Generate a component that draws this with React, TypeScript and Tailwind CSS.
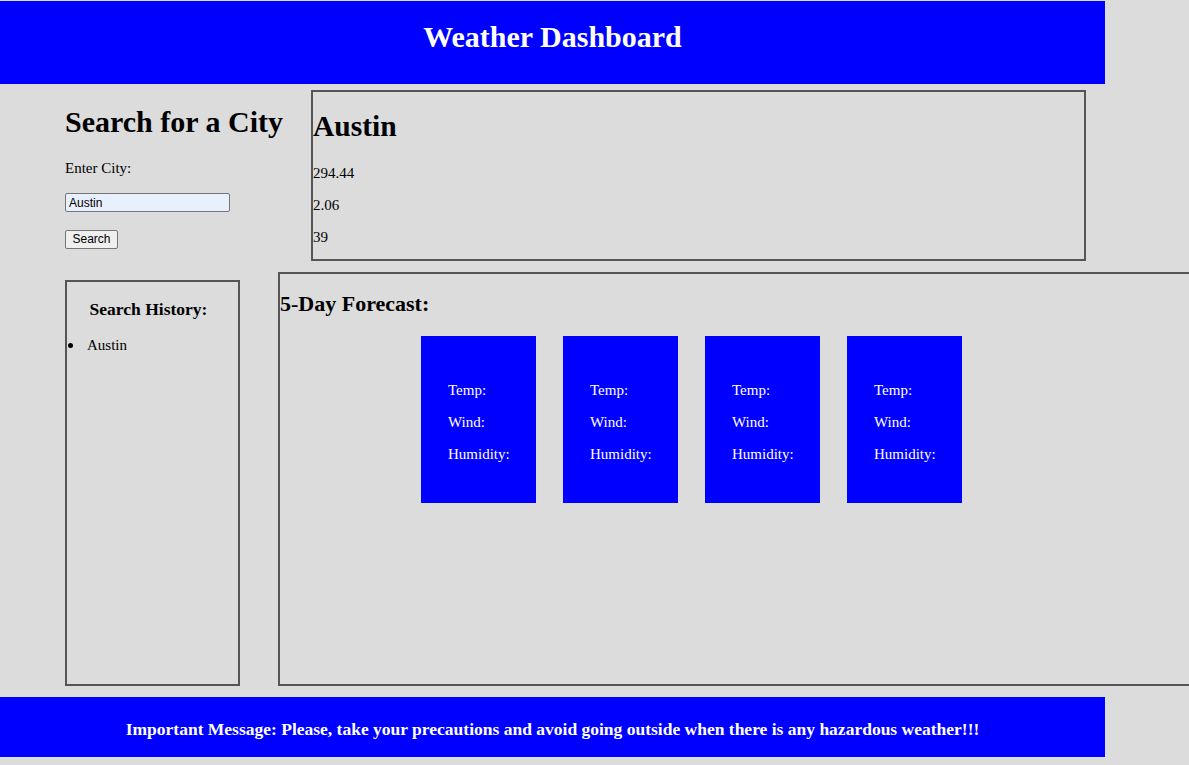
export default function App() {
  const days = [1, 2, 3, 4];

  return (
    <div className="w-[1189px] min-h-[765px] overflow-hidden bg-[#dcdcdc] pt-px font-['Liberation_Serif',serif] text-[15px] text-black">
      {/* Header */}
      <header className="h-[83px] w-[1105px] bg-[#0000ff] pt-[19px] text-center">
        <h1 className="text-[30px] font-bold leading-[33px] text-white">Weather Dashboard</h1>
      </header>

      {/* Search + current weather */}
      <div className="flex items-start">
        <section className="ml-[65px] w-[246px] shrink-0 pt-[21px]">
          <h1 className="text-[30px] font-bold leading-[33px]">Search for a City</h1>
          <p className="mt-[22px] leading-[17px]">Enter City:</p>
          <input
            defaultValue="Austin"
            className="mt-[16px] block h-[19px] w-[165px] rounded-[2px] border border-[#767676] bg-[#e8f0fe] pl-[3px] font-['Liberation_Sans',sans-serif] text-[12px] text-black outline-none"
          />
          <button className="mt-[18px] block h-[19px] w-[53px] rounded-[2px] border border-[#767676] bg-[#efefef] font-['Liberation_Sans',sans-serif] text-[12px] leading-[17px] text-black">
            Search
          </button>
        </section>

        <section className="mt-[6px] w-[775px] shrink-0 border-2 border-[#555]">
          <h1 className="mt-[18px] mb-[22px] text-[29.5px] font-bold leading-[33px]">Austin</h1>
          <p className="my-[15px] leading-[17px]">294.44</p>
          <p className="my-[15px] leading-[17px]">2.06</p>
          <p className="mt-[15px] mb-[13px] leading-[17px]">39</p>
        </section>
      </div>

      {/* History + forecast */}
      <div className="mt-[11px] flex items-start">
        <aside className="ml-[65px] mt-[8px] h-[406px] w-[175px] shrink-0 border-2 border-[#555]">
          <h3 className="mt-[17px] pr-[8px] text-center text-[17.5px] font-bold leading-[20px]">Search History:</h3>
          <ul className="mt-[18px]">
            <li className="flex items-center leading-[17px]">
              <span className="ml-px h-[5px] w-[5px] rounded-full bg-black" />
              <span className="ml-[14px]">Austin</span>
            </li>
          </ul>
        </aside>

        <section className="ml-[38px] h-[414px] w-[940px] shrink-0 border-2 border-[#555]">
          <h2 className="mt-[17px] text-[22px] font-bold leading-[25px]">5-Day Forecast:</h2>
          <div className="ml-[141px] mt-[20px] flex gap-[27px]">
            {days.map((d) => (
              <div key={d} className="h-[167px] w-[115px] bg-[#0000ff] pl-[27px] pt-[46px] text-white">
                <p className="mb-[15px] leading-[17px]">Temp:</p>
                <p className="mb-[15px] leading-[17px]">Wind:</p>
                <p className="leading-[17px]">Humidity:</p>
              </div>
            ))}
          </div>
        </section>
      </div>

      {/* Footer */}
      <footer className="mt-[11px] flex h-[60px] w-[1105px] items-center justify-center bg-[#0000ff]">
        <h3 className="pt-[4px] text-[17.5px] font-bold leading-[20px] text-white">
          Important Message: Please, take your precautions and avoid going outside when there is any hazardous weather!!!
        </h3>
      </footer>
    </div>
  );
}
